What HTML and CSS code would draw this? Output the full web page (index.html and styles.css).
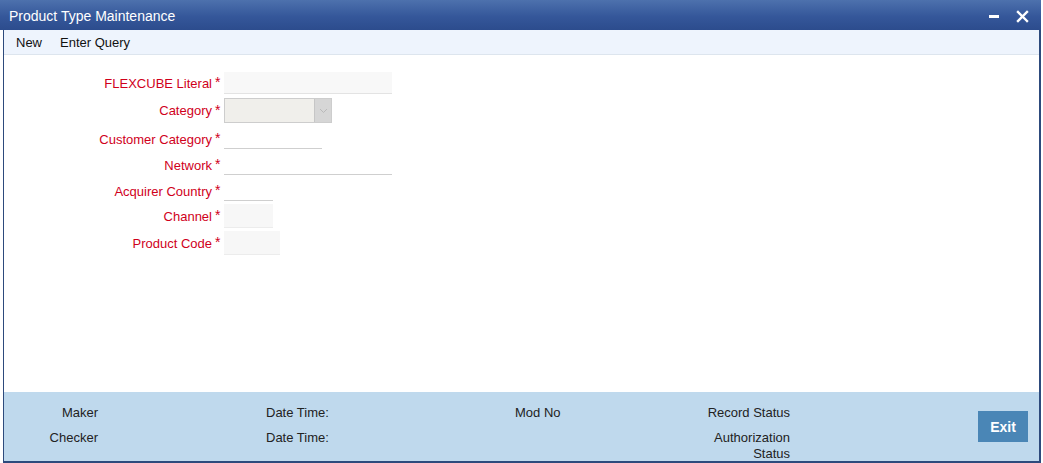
FILE: index.html
```html
<!DOCTYPE html>
<html lang="en">
<head>
<meta charset="utf-8">
<title>Product Type Maintenance</title>
<link rel="stylesheet" href="styles.css">
</head>
<body>
<div class="window">
  <header class="titlebar">
    <span class="title">Product Type Maintenance</span>
    <div class="win-controls">
      <svg class="ctl" width="12" height="12" viewBox="0 0 12 12"><rect x="1" y="5" width="10" height="3" fill="#fff"/></svg>
      <svg class="ctl" width="13" height="13" viewBox="0 0 13 13"><path d="M2 2 L11 11 M11 2 L2 11" stroke="#fff" stroke-width="2.4" stroke-linecap="square"/></svg>
    </div>
  </header>
  <div class="frame">
    <nav class="toolbar">
      <span class="tool">New</span>
      <span class="tool">Enter Query</span>
    </nav>
    <main class="form">
      <div class="row">
        <label class="lbl">FLEXCUBE Literal</label><span class="req">*</span>
        <span class="field field-fill w-wide h22"></span>
      </div>
      <div class="row">
        <label class="lbl">Category</label><span class="req">*</span>
        <span class="select">
          <span class="select-val"></span>
          <span class="select-btn"><svg width="9" height="6" viewBox="0 0 9 6"><path d="M1 1 L4.5 4.5 L8 1" fill="none" stroke="#b9b9b9" stroke-width="1"/></svg></span>
        </span>
      </div>
      <div class="row row-line">
        <label class="lbl">Customer Category</label><span class="req">*</span>
        <span class="field field-line w-mid"></span>
      </div>
      <div class="row row-line">
        <label class="lbl">Network</label><span class="req">*</span>
        <span class="field field-line w-wide"></span>
      </div>
      <div class="row row-line">
        <label class="lbl">Acquirer Country</label><span class="req">*</span>
        <span class="field field-line w-short"></span>
      </div>
      <div class="row row-box">
        <label class="lbl">Channel</label><span class="req">*</span>
        <span class="field field-box w-short"></span>
      </div>
      <div class="row row-box">
        <label class="lbl">Product Code</label><span class="req">*</span>
        <span class="field field-box w-code"></span>
      </div>
    </main>
    <footer class="audit">
      <span class="a-lbl c1 r1">Maker</span>
      <span class="a-lbl c2 r1">Date Time:</span>
      <span class="a-lbl c3 r1">Mod No</span>
      <span class="a-lbl c4 r1">Record Status</span>
      <span class="a-lbl c1 r2">Checker</span>
      <span class="a-lbl c2 r2">Date Time:</span>
      <span class="a-lbl c4 r2">Authorization<br>Status</span>
      <button class="exit">Exit</button>
    </footer>
  </div>
</div>
</body>
</html>
```
FILE: styles.css
```css
html, body {
  margin: 0;
  padding: 0;
  background: #fff;
}

body {
  font-family: "Liberation Sans", Arial, sans-serif;
  font-size: 13px;
  color: #222;
}

.window {
  width: 1041px;
  height: 463px;
  display: flex;
  flex-direction: column;
}

/* title bar */
.titlebar {
  height: 30px;
  flex: none;
  display: flex;
  align-items: center;
  justify-content: space-between;
  padding: 0 12px 0 9px;
  background: linear-gradient(#4d71ad, #35579a 55%, #2c4c8d);
  color: #fff;
}

.title {
  font-size: 14px;
  position: relative;
  top: 1px;
}

.win-controls {
  display: flex;
  align-items: center;
  gap: 16px;
  position: relative;
  top: 1px;
}

.ctl {
  display: block;
}

/* content frame */
.frame {
  flex: 1;
  display: flex;
  flex-direction: column;
  margin-left: 3px;
  border-left: 1px solid #2d4a7c;
  border-right: 2px solid #2d4a7c;
  border-bottom: 2px solid #2d4a7c;
  min-height: 0;
}

.toolbar {
  height: 24px;
  flex: none;
  display: flex;
  align-items: center;
  gap: 18px;
  padding-left: 12px;
  background: #eef4fd;
  border-bottom: 1px solid #dde5ee;
  color: #111;
}

/* form */
.form {
  flex: 1;
  display: flex;
  flex-direction: column;
  gap: 4px;
  padding-top: 17px;
}

.row {
  display: grid;
  grid-template-columns: 208px 12px auto;
  align-items: center;
}

.row-line {
  margin-top: 2px;
}

.row-box {
  margin-top: -1px;
}

.lbl {
  text-align: right;
  color: #d0001b;
}

.req {
  color: #d0001b;
  font-size: 14px;
  padding-left: 3px;
  position: relative;
  top: -1px;
}

.field {
  display: block;
  box-sizing: border-box;
}

.h22 { height: 22px; }

.field-fill {
  background: #f8f8f8;
  border-bottom: 1px solid #e3e3e3;
}

.field-line {
  height: 20px;
  border-bottom: 1px solid #cfcfcf;
}

.field-box {
  height: 24px;
  background: #f7f7f7;
  border-bottom: 1px solid #ececec;
}

.w-wide { width: 168px; }
.w-mid { width: 98px; }
.w-short { width: 49px; }
.w-code { width: 56px; }

.select {
  display: flex;
  width: 108px;
  height: 25px;
  box-sizing: border-box;
  border: 1px solid #cdcdcd;
  background: #f0efeb;
}

.select-val {
  flex: 1;
}

.select-btn {
  width: 16px;
  display: flex;
  align-items: center;
  justify-content: center;
  background: #d6d6d6;
  border-left: 1px solid #c6c6c6;
}

/* audit footer */
.audit {
  flex: none;
  height: 56px;
  padding-top: 13px;
  background: #bfd9ed;
  display: grid;
  grid-template-columns: 94px 168px 249px 185px 90px 1fr;
  grid-template-rows: 16px auto;
  row-gap: 9px;
  line-height: 16px;
  color: #222;
  overflow: hidden;
}

.r1 { grid-row: 1; }
.r2 { grid-row: 2; }

.c1 { grid-column: 1; text-align: right; }
.c2 { grid-column: 3; }
.c3 { grid-column: 4; }
.c4 { grid-column: 5; text-align: right; }

.exit {
  grid-column: 6;
  grid-row: 1 / span 2;
  justify-self: end;
  align-self: start;
  margin-top: 6px;
  margin-right: 11px;
  width: 50px;
  height: 31px;
  border: none;
  background: #4a86b6;
  color: #fff;
  font-family: "Liberation Sans", Arial, sans-serif;
  font-weight: bold;
  font-size: 14px;
  padding: 0;
}
```
